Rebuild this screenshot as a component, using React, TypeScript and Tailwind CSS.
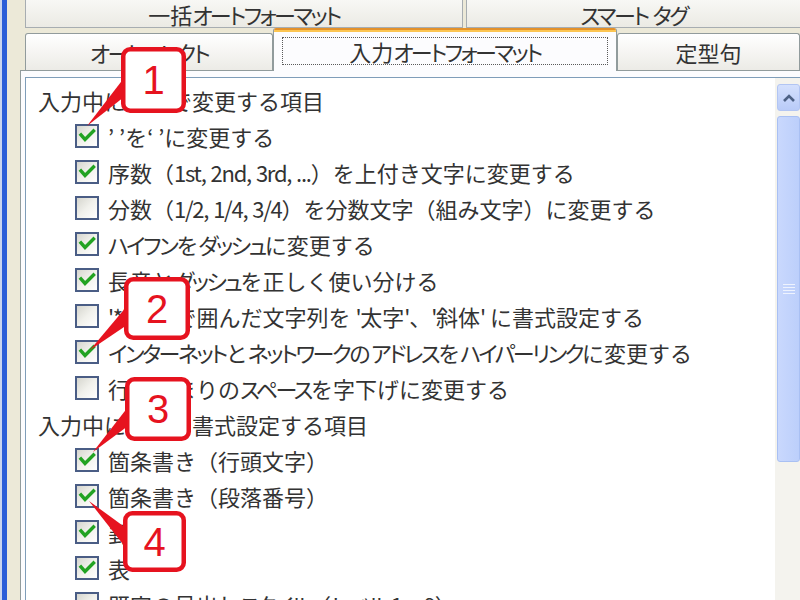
import React from "react";

// Katakana runs and Latin runs are set tighter, like the dialog's UI font
const RUNS = /([\u30A0-\u30FF]+|[A-Za-z0-9.,/'*_]+)/;
const IS_KATA = /^[\u30A0-\u30FF]+$/;

function JText({ text }: { text: string }) {
  const parts = text.split(RUNS);
  return (
    <span className="whitespace-pre">
      {parts.map((p, i) => {
        if (i % 2 === 0) return <React.Fragment key={i}>{p}</React.Fragment>;
        if (IS_KATA.test(p))
          return (
            <span key={i} className="[font-feature-settings:'palt'] tracking-[-2.5px]">
              {p}
            </span>
          );
        return (
          <span key={i} className="tracking-[-1.25px]">
            {p}
          </span>
        );
      })}
    </span>
  );
}

function CheckBox({ on }: { on: boolean }) {
  return (
    <span className="w-[24px] h-[24px] shrink-0 border-2 border-[#4a5d85] bg-linear-to-br from-[#d6d6cf] via-[#f1f1ec] to-white flex items-center justify-center">
      {on && (
        <svg width="20" height="20" viewBox="0 0 20 20">
          <path
            d="M4 9 L8 13.5 L16.5 5"
            fill="none"
            stroke="#22a322"
            strokeWidth="3.4"
            strokeLinecap="square"
          />
        </svg>
      )}
    </span>
  );
}

type Item = { on: boolean; text: string };

const changeItems: Item[] = [
  { on: true, text: "’ ’を‘ ’に変更する" },
  { on: true, text: "序数（1st, 2nd, 3rd, ...）を上付き文字に変更する" },
  { on: false, text: "分数（1/2, 1/4, 3/4）を分数文字（組み文字）に変更する" },
  { on: true, text: "ハイフンをダッシュに変更する" },
  { on: true, text: "長音とダッシュを正しく使い分ける" },
  { on: false, text: "'*'、'_' で囲んだ文字列を '太字'、'斜体' に書式設定する" },
  { on: true, text: "インターネットとネットワークのアドレスをハイパーリンクに変更する" },
  { on: false, text: "行の始まりのスペースを字下げに変更する" },
];

const formatItems: Item[] = [
  { on: true, text: "箇条書き（行頭文字）" },
  { on: true, text: "箇条書き（段落番号）" },
  { on: true, text: "罫線" },
  { on: true, text: "表" },
  { on: false, text: "既定の見出しスタイル（レベル 1～9）" },
];

function Heading({ text }: { text: string }) {
  return (
    <div className="h-[36px] shrink-0 flex items-center whitespace-nowrap">
      <JText text={text} />
    </div>
  );
}

function Row({ item }: { item: Item }) {
  return (
    <div className="h-[36px] shrink-0 flex items-center gap-[9px] pl-[37px] whitespace-nowrap">
      <CheckBox on={item.on} />
      <JText text={item.text} />
    </div>
  );
}

const RED = "#e6131f";

type CalloutProps = {
  l: number;
  t: number;
  r: number;
  b: number;
  tail: string;
  n: string;
};

function Callout({ l, t, r, b, tail, n }: CalloutProps) {
  const sw = 4.5;
  return (
    <g>
      <polygon points={tail} fill={RED} />
      <rect
        x={l + sw / 2}
        y={t + sw / 2}
        width={r - l - sw}
        height={b - t - sw}
        rx={7}
        fill="white"
        stroke={RED}
        strokeWidth={sw}
      />
      <text
        x={(l + r) / 2}
        y={(t + b) / 2 + 14}
        textAnchor="middle"
        fontFamily="'Liberation Sans', Arial, sans-serif"
        fontSize="40"
        fill={RED}
      >
        {n}
      </text>
    </g>
  );
}

function Tab({ label, className }: { label: string; className: string }) {
  return (
    <div
      className={
        "flex items-center justify-center whitespace-nowrap border-x border-t border-[#919b9c] rounded-t-[3px] bg-linear-to-b from-white to-[#ecebe6] " +
        className
      }
    >
      <JText text={label} />
    </div>
  );
}

export default function App() {
  return (
    <div className="relative w-[800px] h-[600px] overflow-hidden flex bg-[#ece9d8] text-[22px] leading-none text-[#333333] font-[family-name:'Noto_Sans_CJK_JP','Noto_Sans',sans-serif]">
      {/* window frame edge */}
      <div className="w-[2px] shrink-0 bg-[#c9d5ef]" />
      <div className="w-[5px] shrink-0 bg-[#2b5ed8]" />
      <div className="w-[13px] shrink-0 bg-[#ece9d8]" />

      <div className="flex-1 flex flex-col min-w-0">
        {/* back row of tabs */}
        <div className="h-[28px] shrink-0 flex gap-[3px] ml-[5px]">
          <div className="w-[438px] flex items-center justify-center whitespace-nowrap border-x border-b border-[#a7adb1] bg-linear-to-b from-[#f8f8f5] to-[#ebeae4]">
            <JText text="一括オートフォーマット" />
          </div>
          <div className="flex-1 flex items-center justify-center whitespace-nowrap border-l border-b border-[#a7adb1] bg-linear-to-b from-[#f8f8f5] to-[#ebeae4]">
            <JText text="スマート タグ" />
          </div>
        </div>

        {/* front row of tabs */}
        <div className="h-[42px] shrink-0 flex items-end ml-[5px]">
          <Tab label="オートコレクト" className="w-[248px] h-[37px]" />
          <div className="relative z-10 w-[344px] h-[43px] -mb-px flex flex-col border-x border-[#919b9c] rounded-t-[3px] overflow-hidden bg-[#fcfcfe]">
            <div className="h-[2px] shrink-0 bg-[#e3912a]" />
            <div className="h-[2px] shrink-0 bg-[#fcc552]" />
            <div className="flex-1 px-[8px] pt-[5px] pb-[6px] flex">
              <div className="flex-1 flex items-center justify-center whitespace-nowrap border border-dotted border-[#5a5a5a]">
                <JText text="入力オートフォーマット" />
              </div>
            </div>
          </div>
          <Tab label="定型句" className="flex-1 h-[37px]" />
        </div>

        {/* tab page */}
        <div className="flex-1 min-h-0 flex flex-col border-t border-l border-[#919b9c] bg-[#fcfcfe] pl-[4px] pt-[6px]">
          <div className="flex-1 min-h-0 flex border-t border-l border-[#7f9db9] bg-white overflow-hidden">
            <div className="flex-1 min-w-0 flex flex-col pl-[12px] pt-[4px] overflow-hidden">
              <Heading text="入力中に自動で変更する項目" />
              {changeItems.map((it, i) => (
                <Row key={i} item={it} />
              ))}
              <Heading text="入力中に自動で書式設定する項目" />
              {formatItems.map((it, i) => (
                <Row key={i} item={it} />
              ))}
            </div>

            {/* vertical scrollbar */}
            <div className="w-[25px] shrink-0 flex flex-col gap-[5px] pl-[2px] pt-[6px] bg-[#f4f3ee]">
              <div className="h-[27px] shrink-0 rounded-[3px] border border-[#b2c5f3] bg-linear-to-b from-[#d4e0fd] to-[#b9cbf8] flex items-center justify-center">
                <svg width="14" height="10" viewBox="0 0 14 10">
                  <path d="M2 8 L7 3 L12 8" fill="none" stroke="#4d6185" strokeWidth="2.6" />
                </svg>
              </div>
              <div className="h-[346px] shrink-0 rounded-[3px] border border-[#a9c0f3] bg-linear-to-r from-[#c9d8fd] to-[#bccffb] flex items-center justify-center">
                <div className="flex flex-col gap-[2px]">
                  <div className="w-[12px] h-px bg-[#eef3fe]" />
                  <div className="w-[12px] h-px bg-[#eef3fe]" />
                  <div className="w-[12px] h-px bg-[#eef3fe]" />
                  <div className="w-[12px] h-px bg-[#eef3fe]" />
                </div>
              </div>
            </div>
          </div>
        </div>
      </div>

      {/* numbered callouts */}
      <svg
        className="absolute left-0 top-0 pointer-events-none"
        width="800"
        height="600"
        viewBox="0 0 800 600"
      >
        <Callout l={121} t={47} r={186} b={113} tail="124,78 124,97 87,126" n="1" />
        <Callout l={124} t={277} r={190} b={340} tail="127,306 127,325 90,350" n="2" />
        <Callout l={125} t={377} r={191} b={441} tail="128,407 128,426 93,452" n="3" />
        <Callout l={123} t={511} r={186} b={572} tail="126,528 126,548 89,501" n="4" />
      </svg>
    </div>
  );
}
